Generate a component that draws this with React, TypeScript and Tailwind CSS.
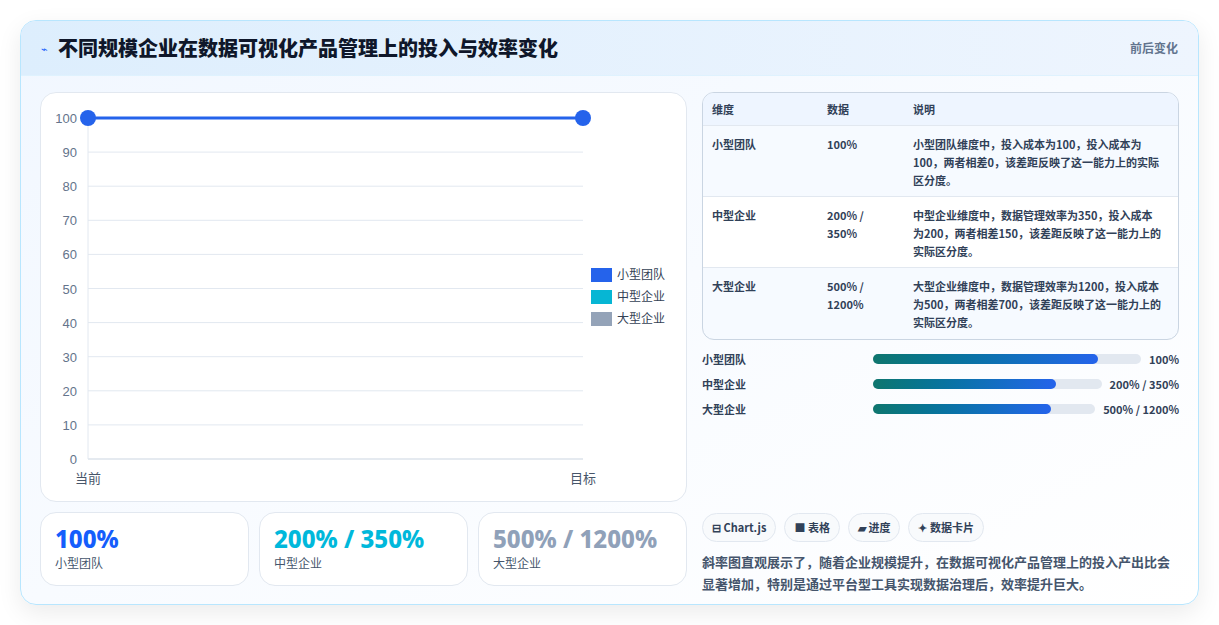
const font = { fontFamily: '"Noto Sans CJK SC", "Noto Sans", sans-serif' };

const rows = [
  { d: "小型团队", v: "100%", t: "小型团队维度中，投入成本为100，投入成本为100，两者相差0，该差距反映了这一能力上的实际区分度。" },
  { d: "中型企业", v: "200% / 350%", t: "中型企业维度中，数据管理效率为350，投入成本为200，两者相差150，该差距反映了这一能力上的实际区分度。" },
  { d: "大型企业", v: "500% / 1200%", t: "大型企业维度中，数据管理效率为1200，投入成本为500，两者相差700，该差距反映了这一能力上的实际区分度。" },
];

function Chart() {
  const top = 117, bottom = 458, left = 87, right = 582;
  const ticks = [100, 90, 80, 70, 60, 50, 40, 30, 20, 10, 0];
  const y = (v: number) => bottom - ((bottom - top) * v) / 100;
  return (
    <svg width="646" height="409" viewBox="40 92 646 409" className="block">
      {ticks.map((t) => (
        <g key={t}>
          <line x1={left} x2={right} y1={y(t)} y2={y(t)} stroke={t === 0 ? "#cbd5e1" : "#e2e8f0"} />
          <text x={76} y={y(t) + 5} textAnchor="end" fontSize="13" fill="#64748b" fontFamily="Liberation Sans, sans-serif">{t}</text>
        </g>
      ))}
      <line x1={left} x2={left} y1={top} y2={bottom} stroke="#e2e8f0" />
      <text x={left} y={482} textAnchor="middle" fontSize="13" fill="#475569" fontFamily="Noto Sans CJK SC">当前</text>
      <text x={right} y={482} textAnchor="middle" fontSize="13" fill="#475569" fontFamily="Noto Sans CJK SC">目标</text>
      <line x1={left} x2={right} y1={top} y2={top} stroke="#2563eb" strokeWidth="3" />
      <circle cx={left} cy={top} r="8" fill="#2563eb" />
      <circle cx={right} cy={top} r="8" fill="#2563eb" />
      {[["#2563eb", "小型团队", 274], ["#06b6d4", "中型企业", 296], ["#94a3b8", "大型企业", 318]].map(([c, l, yy]) => (
        <g key={l as string}>
          <rect x={590} y={(yy as number) - 7} width={21} height={14} fill={c as string} />
          <text x={616} y={(yy as number) + 4} fontSize="12" fill="#334155" fontFamily="Noto Sans CJK SC">{l}</text>
        </g>
      ))}
    </svg>
  );
}

export default function App() {
  return (
    <div className="min-h-[625px] w-[1219px] bg-white px-5 pt-5" style={font}>
      <div className="h-[585px] w-[1179px] overflow-hidden rounded-2xl border border-sky-200 bg-gradient-to-br from-[#f1f7ff] to-white shadow-[0_8px_24px_rgba(0,0,0,0.08)]">
        <div className="flex h-[55px] items-center justify-between border-b border-sky-100 bg-gradient-to-r from-[#ddeefd] to-[#eef5fe] px-5">
          <div className="flex items-center gap-2.5">
            <span className="text-[11px] text-blue-600">⌁</span>
            <h1 className="text-[20px] font-extrabold text-[#0f172a]">不同规模企业在数据可视化产品管理上的投入与效率变化</h1>
          </div>
          <span className="text-xs font-semibold text-slate-500">前后变化</span>
        </div>
        <div className="flex gap-[15px] px-[19px] pt-[16px]">
          <div className="flex w-[647px] flex-col gap-[10px]">
            <div className="h-[410px] overflow-hidden rounded-2xl border border-slate-200 bg-white">
              <Chart />
            </div>
            <div className="grid grid-cols-3 gap-[10px]">
              {[["100%", "小型团队", "text-blue-600"], ["200% / 350%", "中型企业", "text-cyan-500"], ["500% / 1200%", "大型企业", "text-slate-400"]].map(([v, l, c]) => (
                <div key={l} className="h-[74px] rounded-2xl border border-slate-200 bg-white px-[14px] pt-[10px]">
                  <div className={`whitespace-nowrap text-[24px] font-extrabold leading-8 ${c}`} style={{ fontFamily: '"Noto Sans", sans-serif' }}>{v}</div>
                  <div className="text-xs text-slate-600">{l}</div>
                </div>
              ))}
            </div>
          </div>
          <div className="flex w-[479px] flex-col">
            <div className="overflow-hidden rounded-xl border border-slate-300 bg-[#f6faff]">
              <div className="flex h-[33px] items-center border-b border-slate-200 bg-[#eef5ff] px-[9px] text-[11px] font-bold text-slate-700">
                <span className="w-[115px]">维度</span><span className="w-[86px]">数据</span><span>说明</span>
              </div>
              {rows.map((r, i) => (
                <div key={r.d} className={`flex h-[71px] px-[9px] pt-[9px] text-[11px] leading-[18px] text-slate-700 ${i < 2 ? "border-b border-slate-200" : ""} ${i === 1 ? "bg-white" : ""}`}>
                  <span className="w-[115px] font-bold">{r.d}</span>
                  <span className="w-[86px] pr-[30px] font-semibold">{r.v}</span>
                  <span className="flex-1 pr-[6px] font-semibold">{r.t}</span>
                </div>
              ))}
            </div>
            <div className="mt-[9px] flex flex-col gap-[5px]">
              {rows.map((r, i) => (
                <div key={r.d} className="flex h-[20px] items-center gap-2 text-[11px] text-slate-700">
                  <span className="w-[163px] font-semibold">{r.d}</span>
                  <div className="h-[10px] flex-1 rounded-full bg-slate-200">
                    <div className="h-full rounded-full bg-gradient-to-r from-[#0f766e] to-[#2563eb]" style={{ width: `${[84, 80, 80][i]}%` }} />
                  </div>
                  <span className="font-bold">{r.v}</span>
                </div>
              ))}
            </div>
            <div className="mt-[94px] flex gap-2">
              {["⊟ Chart.js", "■ 表格", "▰ 进度", "✦ 数据卡片"].map((p) => (
                <span key={p} className="rounded-full border border-slate-200 bg-[#f8fafc] px-[9px] py-[5px] text-[11px] font-bold text-slate-700">{p}</span>
              ))}
            </div>
            <p className="mt-[9px] text-[13px] font-semibold leading-[22px] text-slate-600">
              斜率图直观展示了，随着企业规模提升，在数据可视化产品管理上的投入产出比会显著增加，特别是通过平台型工具实现数据治理后，效率提升巨大。
            </p>
          </div>
        </div>
      </div>
    </div>
  );
}
